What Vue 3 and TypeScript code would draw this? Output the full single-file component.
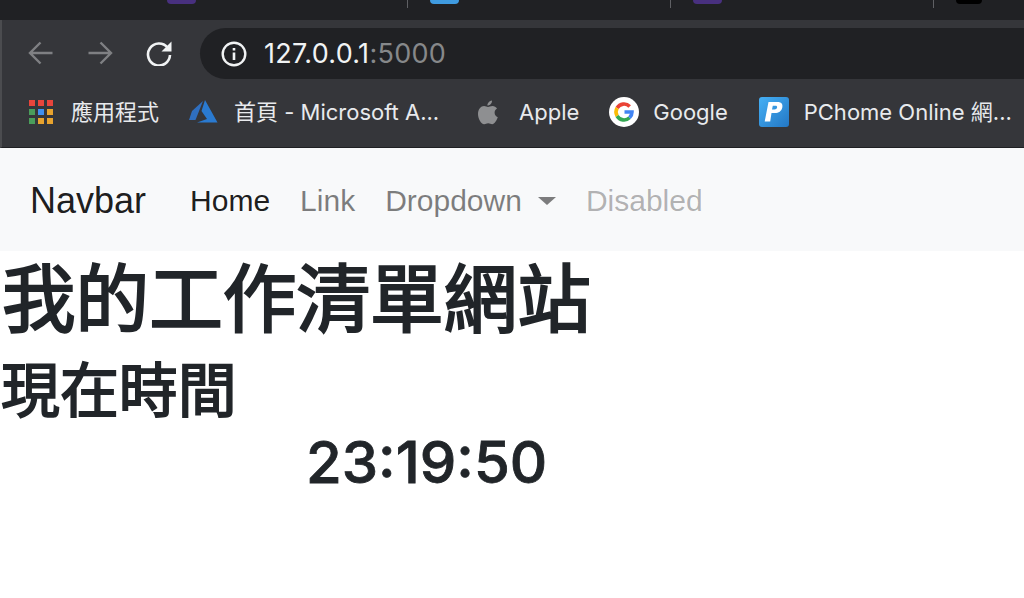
<template>
  <div class="page">
    <div class="tabstrip">
      <div v-for="tab in tabs" :key="tab" class="tab">
        <span class="tab-icon" :class="tab"></span>
      </div>
    </div>
    <div class="toolbar">
      <div class="nav-btns">
        <svg class="btn-icon" viewBox="0 0 26 26" width="26" height="26">
          <path d="M24.500 13H2.500M12.500 2.500 2 13l10.500 10.500" fill="none" stroke="#7f8083" stroke-width="2.400" />
        </svg>
        <svg class="btn-icon" viewBox="0 0 26 26" width="26" height="26">
          <path d="M1.500 13h22M13.500 2.500 24 13 13.500 23.500" fill="none" stroke="#7f8083" stroke-width="2.400" />
        </svg>
        <svg class="btn-icon" viewBox="0 0 26 26" width="26" height="26">
          <path d="M21.500 7.500A11 11 0 1 0 24 15" fill="none" stroke="#f1f3f4" stroke-width="2.600" />
          <path d="M25.500 1.500v10h-10z" fill="#f1f3f4" />
        </svg>
      </div>
      <div class="omnibox">
        <svg viewBox="0 0 26 26" width="26" height="26">
          <circle cx="13" cy="13" r="11.300" fill="none" stroke="#f1f3f4" stroke-width="2.400" />
          <path d="M11.700 11.500h2.600v7.500h-2.600zM11.700 7h2.600v2.600h-2.600z" fill="#f1f3f4" />
        </svg>
        <span class="url">127.0.0.1<span class="port">:5000</span></span>
      </div>
    </div>
    <div class="bookmarks">
      <div class="bookmark first">
        <span class="bm-icon">
          <span class="apps">
            <i v-for="(color, i) in appColors" :key="i" :style="{ background: color }"></i>
          </span>
        </span>
        <span class="label">應用程式</span>
      </div>
      <div class="bookmark">
        <span class="bm-icon">
          <svg viewBox="0 0 30 24" width="30" height="24">
            <path d="M14 1 3 11 0 20h6.500z" fill="#2f6fc0" />
            <path d="M16 0 12.500 11 18 19 8 22.500H28.500z" fill="#2a7ad0" />
          </svg>
        </span>
        <span class="label clip">首頁 - Microsoft A...</span>
      </div>
      <div class="bookmark apple">
        <span class="bm-icon">
          <svg viewBox="0 0 20 25" width="20" height="25">
            <path d="M14 .5c.2 2.800-2 5-4.600 5C9.300 3 11.500.8 14 .5z" fill="#8e8f91" />
            <path d="M10 7c1.200 0 2.500-1 4.500-1 1.800 0 3.500 1 4.500 2.500-3.600 2.200-3 7.200.8 8.800-1 2.800-3.300 7-5.600 7-1.500 0-2.300-1-4-1-1.800 0-2.600 1-4 1C3 24.300 0 18.500 0 14c0-5 3-8 6-8 1.700 0 3 1 4 1z" fill="#8e8f91" />
          </svg>
        </span>
        <span class="label">Apple</span>
      </div>
      <div class="bookmark google">
        <span class="bm-icon">
          <svg viewBox="0 0 30 30" width="30" height="30">
            <circle cx="15" cy="15" r="15" fill="#fff" />
            <g fill="none" stroke-width="3.600">
              <path d="M8.100 11A8 8 0 0 1 20.700 9.400" stroke="#ea4335" />
              <path d="M8.100 11A8 8 0 0 0 8.100 19" stroke="#fbbc05" />
              <path d="M8.100 19A8 8 0 0 0 20.500 20.800" stroke="#34a853" />
              <path d="M20.500 20.800A8 8 0 0 0 23 15H15.500" stroke="#4285f4" />
            </g>
          </svg>
        </span>
        <span class="label">Google</span>
      </div>
      <div class="bookmark">
        <span class="bm-icon">
          <svg viewBox="0 0 30 30" width="30" height="30">
            <defs>
              <linearGradient id="pchome" x1="0" y1="0" x2="1" y2="1">
                <stop offset="0" stop-color="#45b0f5" />
                <stop offset="1" stop-color="#2377c4" />
              </linearGradient>
            </defs>
            <rect width="30" height="30" rx="3" fill="url(#pchome)" />
            <path fill-rule="evenodd" d="M9.500 5h9c4 0 5.500 2.200 4.800 5.500-.8 3.700-3.500 5.500-7.500 5.500h-3.300l-1.300 8.500H5.700zM13.800 8.800l-.8 3.700h2.400c1.500 0 2.400-.6 2.700-1.900.2-1.200-.4-1.800-1.700-1.800z" fill="#fff" />
          </svg>
        </span>
        <span class="label clip">PChome Online 網...</span>
      </div>
    </div>
    <nav class="navbar">
      <span class="brand">Navbar</span>
      <span class="nav-link active">Home</span>
      <span class="nav-link">Link</span>
      <span class="nav-link">Dropdown<i class="caret"></i></span>
      <span class="nav-link disabled">Disabled</span>
    </nav>
    <h1>我的工作清單網站</h1>
    <h2>現在時間</h2>
    <div class="clock">{{ time }}</div>
  </div>
</template>

<script setup lang="ts">
const tabs: string[] = ['purple', 'blue', 'purple', 'black']
const time = '23:19:50'
const appColors: string[] = [
  '#e8453c', '#e8453c', '#e8453c',
  '#4a9d5b', '#3f8ff0', '#e8a32e',
  '#4a9d5b', '#e8a32e', '#e8a32e',
]
</script>

<style>
html,
body {
  margin: 0;
  background: #fff;
  overflow: hidden;
}
</style>

<style scoped>
.page {
  width: 1024px;
  height: 598px;
  overflow: hidden;
  font-family: "Liberation Sans", "Noto Sans CJK TC", sans-serif;
  color: #212529;
}

.tabstrip {
  display: flex;
  height: 20px;
  padding-left: 145px;
  background: #202124;
}

.tab {
  flex: 0 0 263px;
  height: 8px;
  padding-left: 22px;
  box-sizing: border-box;
  border-right: 1px solid #5f6064;
}

.tab-icon {
  display: block;
  width: 29px;
  height: 4px;
  border-radius: 0 0 4px 4px;
}

.tab-icon.purple {
  background: #48307f;
}

.tab-icon.blue {
  background: #3f9be0;
}

.tab-icon.black {
  width: 26px;
  background: #000;
}

.toolbar {
  display: flex;
  align-items: center;
  height: 59px;
  padding: 8px 0 0 26px;
  box-sizing: border-box;
  background: #35363a;
  border-left: 2px solid #4b4c4f;
}

.nav-btns {
  display: flex;
  gap: 33px;
  width: 172px;
  margin-top: -1px;
}

.btn-icon {
  flex: none;
}

.omnibox {
  flex: 1;
  display: flex;
  align-items: center;
  gap: 17px;
  height: 51px;
  padding-left: 21px;
  background: #202124;
  border-radius: 26px 0 0 26px;
}

.url {
  font-family: Inter, "Liberation Sans", sans-serif;
  font-size: 27px;
  letter-spacing: 0.3px;
  color: #f1f3f4;
}

.port {
  color: #86888a;
}

.bookmarks {
  display: flex;
  align-items: center;
  gap: 31px;
  height: 69px;
  padding: 0 0 2px 24px;
  box-sizing: border-box;
  background: #35363a;
  border-left: 2px solid #4b4c4f;
  border-bottom: 1px solid #1f2023;
  font-family: Inter, "Noto Sans CJK TC", sans-serif;
  font-size: 22px;
  color: #e8eaed;
  white-space: nowrap;
}

.bookmark {
  display: flex;
  align-items: center;
  gap: 15px;
}

.bookmark.first {
  margin-right: -1px;
}

.bookmark.apple {
  gap: 16px;
  margin-right: -1px;
}

.bookmark.google {
  gap: 14px;
}

.label {
  line-height: 30px;
}

.label.clip {
  width: 208px;
  overflow: hidden;
}

.bm-icon {
  display: flex;
  align-items: center;
  justify-content: center;
  width: 30px;
  height: 30px;
}

.apps {
  display: grid;
  grid-template-columns: repeat(3, 6px);
  gap: 3px;
}

.apps i {
  display: block;
  height: 6px;
}

.navbar {
  display: flex;
  align-items: center;
  height: 103px;
  padding: 2px 0 0 30px;
  box-sizing: border-box;
  background: #f8f9fa;
  font-size: 30px;
}

.brand {
  margin-right: 29px;
  font-size: 36px;
  color: rgba(0, 0, 0, 0.9);
}

.nav-link {
  padding: 0 15px;
  color: rgba(0, 0, 0, 0.5);
}

.nav-link.active {
  color: rgba(0, 0, 0, 0.9);
}

.nav-link.disabled {
  color: rgba(0, 0, 0, 0.3);
}

.caret {
  display: inline-block;
  margin-left: 16px;
  vertical-align: 6px;
  border-top: 8px solid currentColor;
  border-left: 9px solid transparent;
  border-right: 9px solid transparent;
}

h1 {
  margin: 0;
  padding-left: 2px;
  font-size: 73.600px;
  font-weight: 400;
  line-height: 100px;
  -webkit-text-stroke: 2.200px #212529;
}

h2 {
  margin: 0;
  padding-left: 1px;
  font-size: 58.900px;
  font-weight: 400;
  line-height: 82px;
  -webkit-text-stroke: 1.800px #212529;
}

.clock {
  padding: 1px 0 0 306px;
  font-family: Inter, "Liberation Sans", sans-serif;
  font-size: 58px;
  font-weight: 500;
  line-height: 56px;
  -webkit-text-stroke: 0.800px #212529;
}
</style>
